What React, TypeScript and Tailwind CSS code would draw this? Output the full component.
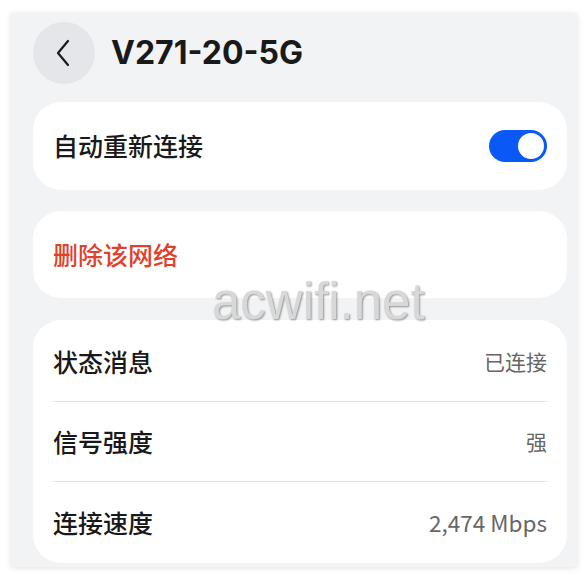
import React from "react";

const cjk = { fontFamily: '"Noto Sans CJK SC", "Noto Sans", sans-serif' };

function Row({ label, value, last, big }: { label: string; value: string; last?: boolean; big?: boolean }) {
  return (
    <div className="flex flex-col">
      <div className={`flex items-center justify-between px-5 ${last ? "h-[81px]" : "h-[79px]"}`}>
        <span className="text-[25px] font-medium text-[#191919]" style={cjk}>{label}</span>
        <span className={`${big ? "text-[22.5px]" : "text-[21px]"} text-[#666666]`} style={cjk}>{value}</span>
      </div>
      {!last && <div className="mx-5 h-px bg-[#e2e2e2]" />}
    </div>
  );
}

export default function App() {
  return (
    <div className="relative h-[575px] w-[588px] overflow-hidden bg-white pl-[11px] pt-[13px]">
      <div className="flex h-[554px] w-[566px] flex-col bg-[#f1f3f5] pl-[22px] pr-[10px] pt-[9px] shadow-[0_1px_6px_rgba(0,0,0,0.12)]">
        <div className="flex h-[62px] items-center">
          <div className="flex h-[62px] w-[62px] items-center justify-center rounded-full bg-[#e4e6e9]">
            <svg width="18" height="28" viewBox="0 0 18 28" fill="none">
              <path d="M13 2 L3 14 L13 26" stroke="#1a1a1a" strokeWidth="2.2" strokeLinecap="round" strokeLinejoin="round" />
            </svg>
          </div>
          <span
            className="ml-4 text-[32px] font-bold text-[#191919]"
            style={{ fontFamily: 'Inter, "Noto Sans", sans-serif' }}
          >
            V271-20-5G
          </span>
        </div>

        <div className="mt-[18px] flex h-[88px] items-center justify-between rounded-[28px] bg-white px-5">
          <span className="text-[25px] font-medium text-[#191919]" style={cjk}>自动重新连接</span>
          <div className="flex h-[32px] w-[58px] items-center justify-end rounded-full bg-[#0a59f7] pr-[3px]">
            <div className="h-[26px] w-[26px] rounded-full bg-white" />
          </div>
        </div>

        <div className="mt-[21px] flex h-[87px] items-center rounded-[28px] bg-white px-5">
          <span className="text-[25px] font-medium text-[#e0412c]" style={cjk}>删除该网络</span>
        </div>

        <div className="mt-[22px] flex flex-col rounded-[28px] bg-white pt-[2px]">
          <Row label="状态消息" value="已连接" />
          <Row label="信号强度" value="强" />
          <Row label="连接速度" value="2,474 Mbps" last big />
        </div>
      </div>

      <div
        className="absolute left-[212px] top-[276px] text-[51px] leading-none text-[#d8d8d8] [text-shadow:1px_1px_2px_rgba(0,0,0,0.4)]"
        style={{ fontFamily: '"Liberation Sans", Arial, sans-serif' }}
      >
        acwifi.net
      </div>
    </div>
  );
}
